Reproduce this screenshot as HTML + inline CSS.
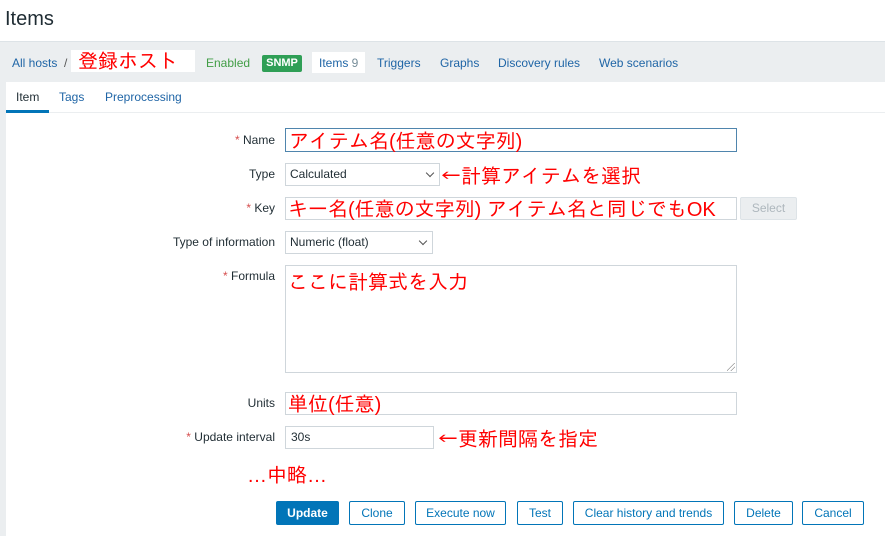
<!DOCTYPE html>
<html><head><meta charset="utf-8"><style>
*{box-sizing:border-box;margin:0;padding:0}
body{width:885px;height:536px;overflow:hidden;background:#fff;font-family:"Liberation Sans",Arial,sans-serif;font-size:12px;color:#1f2c33;position:relative}
.a{position:absolute;white-space:nowrap}
.link{color:#1f65a6}
.red{color:#f00;font-family:"Liberation Sans","IPAGothic",sans-serif;font-size:20px;line-height:24px}
.ar{font-family:"IPAGothic","Noto Sans CJK JP",sans-serif}
.lbl{position:absolute;right:610px;text-align:right;color:#1f2c33}
.lbl b{color:#d64e4e;font-weight:normal}
.in{position:absolute;border:1px solid #cfd6db;background:#fff}
.btn{position:absolute;top:501px;height:24px;border:1px solid #0275b8;border-radius:2px;color:#0275b8;background:#fff;text-align:center;line-height:22px}
.sel:after{content:"";position:absolute;right:6px;top:6px;width:5px;height:5px;border-right:1.5px solid #555;border-bottom:1.5px solid #555;transform:rotate(45deg)}
</style></head><body>
<div class="a" style="left:5px;top:8px;font-size:20px;color:#1f2c33">Items</div>
<div class="a" style="left:0;top:41px;width:885px;height:495px;background:#ebeef0"></div>
<div class="a" style="left:0;top:41px;width:885px;height:1px;background:#dde3e7"></div>
<div class="a link" style="left:12px;top:56px">All hosts</div>
<div class="a" style="left:64px;top:56px;color:#555">/</div>
<div class="a" style="left:71px;top:50px;width:124px;height:22px;background:#fff"></div>
<div class="a red" style="left:78px;top:50px">登録ホスト</div>
<div class="a" style="left:206px;top:56px;color:#429e47">Enabled</div>
<div class="a" style="left:262px;top:55px;width:40px;height:17px;background:#2f9f56;border-radius:2px;color:#fff;font-weight:bold;font-size:11px;line-height:17px;text-align:center">SNMP</div>
<div class="a" style="left:312px;top:52px;width:53px;height:21px;background:#fff"></div>
<div class="a link" style="left:319px;top:56px">Items <span style="color:#768d99">9</span></div>
<div class="a link" style="left:377px;top:56px">Triggers</div>
<div class="a link" style="left:440px;top:56px">Graphs</div>
<div class="a link" style="left:498px;top:56px">Discovery rules</div>
<div class="a link" style="left:599px;top:56px">Web scenarios</div>
<div class="a" style="left:6px;top:82px;width:879px;height:454px;background:#fff"></div>
<div class="a" style="left:6px;top:112px;width:879px;height:1px;background:#ebeef0"></div>
<div class="a" style="left:16px;top:90px">Item</div>
<div class="a" style="left:6px;top:110px;width:43px;height:3px;background:#0275b8"></div>
<div class="a link" style="left:59px;top:90px">Tags</div>
<div class="a link" style="left:105px;top:90px">Preprocessing</div>

<div class="lbl" style="top:133px"><b>*</b> Name</div>
<div class="in" style="left:285px;top:128px;width:452px;height:24px;border-color:#4f85ad"></div>
<div class="a red" style="left:289px;top:130px">アイテム名(任意の文字列)</div>

<div class="lbl" style="top:167px">Type</div>
<div class="in sel" style="left:285px;top:163px;width:155px;height:23px;padding:4px 4px;line-height:13px">Calculated</div>
<div class="a red" style="left:441px;top:164px"><span class="ar">←</span>計算アイテムを選択</div>

<div class="lbl" style="top:201px"><b>*</b> Key</div>
<div class="in" style="left:285px;top:197px;width:452px;height:23px"></div>
<div class="a red" style="left:288px;top:198px">キー名(任意の文字列) アイテム名と同じでもOK</div>
<div class="a" style="left:740px;top:197px;width:57px;height:23px;background:#ebeef0;border:1px solid #dde3e7;border-radius:2px;color:#aeb7bd;text-align:center;line-height:21px">Select</div>

<div class="lbl" style="top:235px">Type of information</div>
<div class="in sel" style="left:285px;top:231px;width:148px;height:23px;padding:4px 4px;line-height:13px">Numeric (float)</div>

<div class="lbl" style="top:269px"><b>*</b> Formula</div>
<div class="in" style="left:285px;top:265px;width:452px;height:108px"></div>
<div class="a red" style="left:288px;top:271px">ここに計算式を入力</div>
<div class="a" style="left:727px;top:363px;width:8px;height:8px;background:linear-gradient(135deg,transparent 45%,#999 45%,#999 52%,transparent 52%,transparent 70%,#999 70%,#999 77%,transparent 77%)"></div>

<div class="lbl" style="top:396px">Units</div>
<div class="in" style="left:285px;top:392px;width:452px;height:23px"></div>
<div class="a red" style="left:288px;top:393px">単位(任意)</div>

<div class="lbl" style="top:430px"><b>*</b> Update interval</div>
<div class="in" style="left:285px;top:426px;width:149px;height:23px;padding:4px 5px;line-height:13px">30s</div>
<div class="a red" style="left:438px;top:427px"><span class="ar">←</span>更新間隔を指定</div>

<div class="a red" style="left:247px;top:464px">…中略…</div>

<div class="btn" style="left:276px;width:63px;background:#0275b8;color:#fff;font-weight:bold">Update</div>
<div class="btn" style="left:349px;width:56px">Clone</div>
<div class="btn" style="left:415px;width:91px">Execute now</div>
<div class="btn" style="left:517px;width:46px">Test</div>
<div class="btn" style="left:573px;width:151px">Clear history and trends</div>
<div class="btn" style="left:734px;width:59px">Delete</div>
<div class="btn" style="left:802px;width:62px">Cancel</div>
</body></html>
